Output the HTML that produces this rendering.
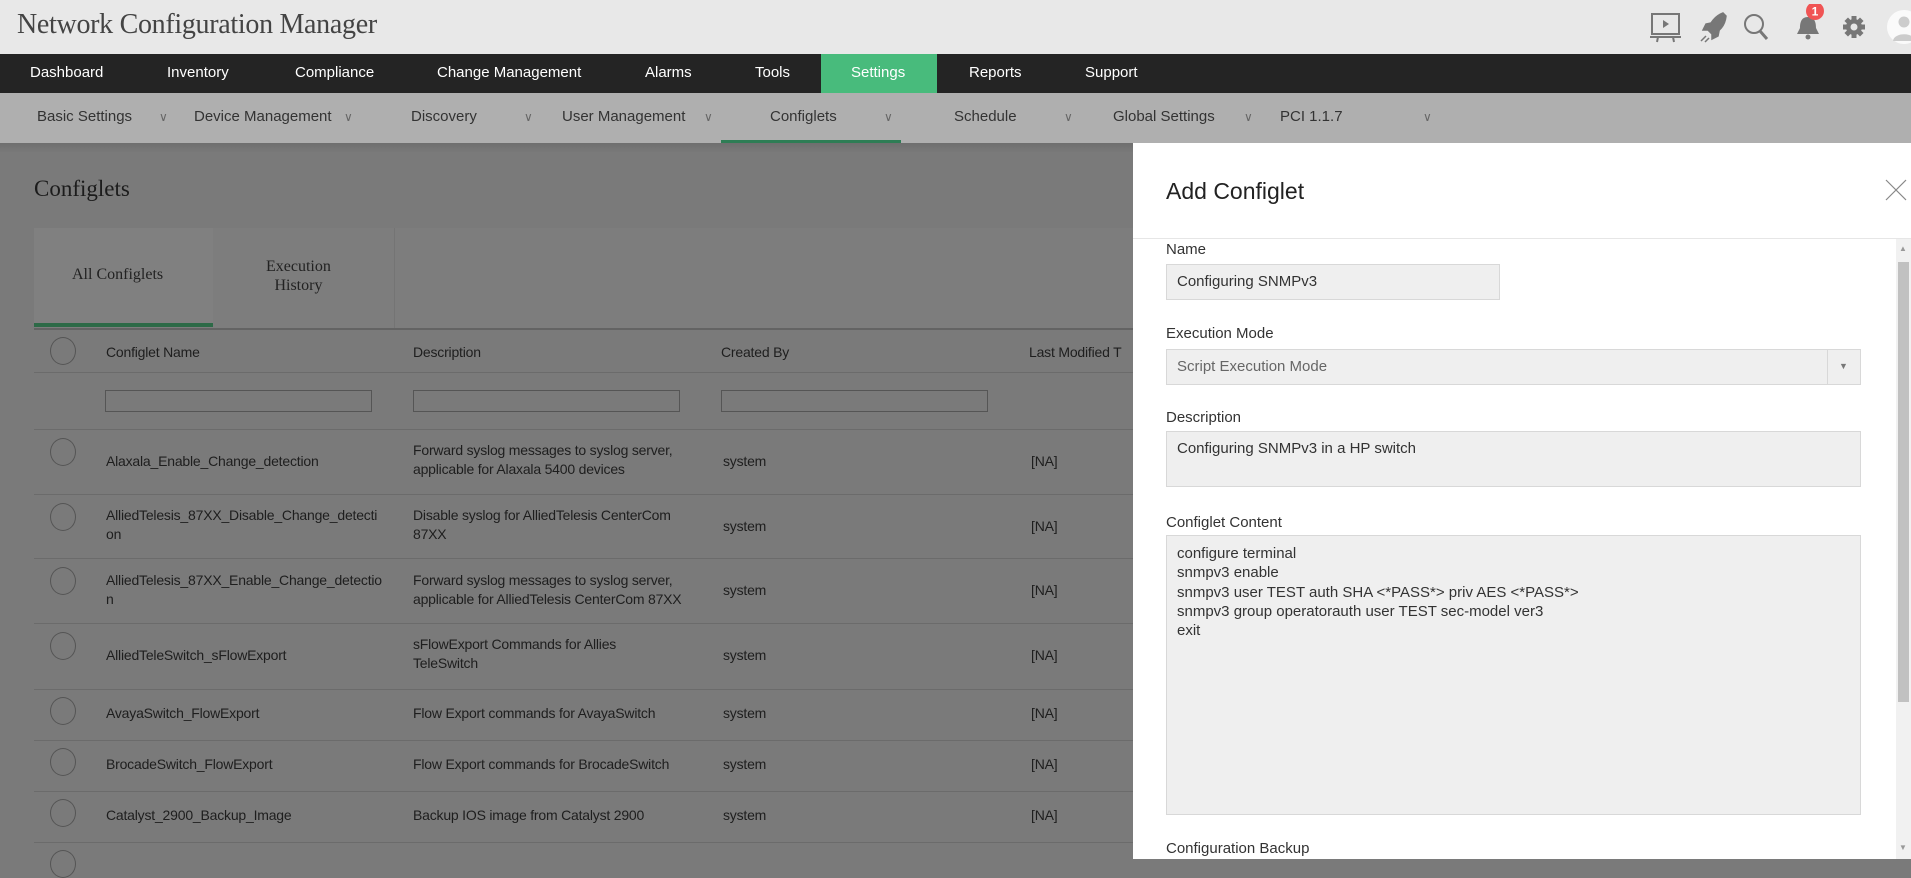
<!DOCTYPE html>
<html><head><meta charset="utf-8"><style>
*{margin:0;padding:0;box-sizing:border-box}
body{width:1911px;height:859px;overflow:hidden;position:relative;font-family:"Liberation Sans",sans-serif;background:#7a7a7a}
.a{position:absolute;white-space:nowrap}
#hdr{position:absolute;left:0;top:0;width:1911px;height:54px;background:#e8e8e8}
#title{left:17px;top:9px;font-family:"Liberation Serif",serif;font-size:28px;color:#444;letter-spacing:-0.3px}
#nav{position:absolute;left:0;top:54px;width:1911px;height:39px;background:#242424}
#nav .a{color:#fff;font-size:15px;top:10px}
#set{position:absolute;left:821px;top:54px;width:116px;height:39px;background:#48bb7c}
#sub{position:absolute;left:0;top:93px;width:1911px;height:50px;background:#afafaf}
#sub .a{font-size:15px;color:#333;top:15px}
#sub .c{color:#666;font-size:12px;top:17px}
.t{color:#1e1e1e;font-size:14px;line-height:19px;white-space:normal;letter-spacing:-0.2px}
.circ{position:absolute;width:26px;height:28px;border:1.5px solid #555;border-radius:50%}
.hl{position:absolute;left:34px;width:1100px;height:1px;background:#6b6b6b}
.in{position:absolute;top:390px;height:22px;width:267px;border:1.5px solid #555}
#panel{position:absolute;left:1133px;top:143px;width:778px;height:716px;background:#fff}
.lbl{font-size:15px;color:#333}
.box{position:absolute;background:#efefef;border:1px solid #d8d8d8;font-size:15px;color:#333;padding:8px 10px}
</style></head><body>
<div id="hdr"></div>
<div class="a" id="title">Network Configuration Manager</div>
<svg class="a" style="left:1648px;top:4px" width="263" height="40" viewBox="0 -6 263 40">
 <g fill="none" stroke="#777" stroke-width="2">
  <rect x="4" y="4" width="27" height="20"/><line x1="2" y1="27" x2="33" y2="27"/><line x1="10" y1="27" x2="9" y2="32"/><line x1="25" y1="27" x2="26" y2="32"/>
  <circle cx="106" cy="14" r="9"/><line x1="112" y1="21" x2="119" y2="29" stroke-width="3"/>
 </g>
 <path d="M15 10 L21 14 L15 18Z" fill="#777"/>
 <path d="M75 3 C67 6 62 13 60 20 L64 24 C71 22 77 16 78 6Z M60 20 L55 20 L58 14 L63 13 Z M64 24 L64 29 L70 26 L71 21Z M58 26 L53 31 M61 28 L57 32" fill="#777" stroke="#777" stroke-width="1.5"/>
 <path d="M160 7 C153 7 152 13 152 18 L149 24 L171 24 L168 18 C168 13 167 7 160 7Z" fill="#777"/><circle cx="160" cy="27" r="2.5" fill="#777"/>
 <circle cx="167" cy="1" r="9" fill="#f05454"/><text x="167" y="5.5" font-size="12" font-weight="bold" fill="#fff" text-anchor="middle" font-family="Liberation Sans">1</text>
 <g transform="translate(206,17)" fill="#777">
  <rect x="-2.5" y="-11" width="5" height="22"/><rect x="-2.5" y="-11" width="5" height="22" transform="rotate(45)"/><rect x="-2.5" y="-11" width="5" height="22" transform="rotate(90)"/><rect x="-2.5" y="-11" width="5" height="22" transform="rotate(135)"/>
  <circle r="8"/><circle r="3.5" fill="#e8e8e8"/>
 </g>
 <circle cx="256" cy="17" r="17" fill="#fafafa"/><circle cx="256" cy="12" r="5.5" fill="#ccc"/><path d="M245 31 C246 22 266 22 267 31Z" fill="#ccc"/>
</svg>
<div id="nav">
 <div class="a" style="left:30px">Dashboard</div>
 <div class="a" style="left:167px">Inventory</div>
 <div class="a" style="left:295px">Compliance</div>
 <div class="a" style="left:437px">Change Management</div>
 <div class="a" style="left:645px">Alarms</div>
 <div class="a" style="left:755px">Tools</div>
 <div class="a" style="left:969px">Reports</div>
 <div class="a" style="left:1085px">Support</div>
</div>
<div id="set"><div class="a" style="left:30px;top:10px;color:#fff;font-size:15px">Settings</div></div>
<div id="sub">
 <div class="a" style="left:37px">Basic Settings</div><div class="a c" style="left:159px">&#8744;</div>
 <div class="a" style="left:194px">Device Management</div><div class="a c" style="left:344px">&#8744;</div>
 <div class="a" style="left:411px">Discovery</div><div class="a c" style="left:524px">&#8744;</div>
 <div class="a" style="left:562px">User Management</div><div class="a c" style="left:704px">&#8744;</div>
 <div class="a" style="left:770px">Configlets</div><div class="a c" style="left:884px">&#8744;</div>
 <div class="a" style="left:954px">Schedule</div><div class="a c" style="left:1064px">&#8744;</div>
 <div class="a" style="left:1113px">Global Settings</div><div class="a c" style="left:1244px">&#8744;</div>
 <div class="a" style="left:1280px">PCI 1.1.7</div><div class="a c" style="left:1423px">&#8744;</div>
 <div style="position:absolute;left:721px;top:47px;width:180px;height:3px;background:#2e7d55"></div>
</div>
<div style="position:absolute;left:0;top:143px;width:1911px;height:10px;background:linear-gradient(#6e6e6e,#7a7a7a)"></div>
<div class="a" style="left:34px;top:176px;font-size:23px;color:#1c1c1c;font-family:'Liberation Serif',serif">Configlets</div>
<div style="position:absolute;left:34px;top:228px;width:1100px;height:100px;background:#7d7d7d"></div>
<div style="position:absolute;left:34px;top:228px;width:179px;height:96px;background:#808080"></div>
<div style="position:absolute;left:394px;top:228px;width:1px;height:100px;background:#747474"></div>
<div style="position:absolute;left:34px;top:323px;width:179px;height:4px;background:#2d6a47"></div>
<div class="a" style="left:72px;top:266px;font-family:'Liberation Serif',serif;font-size:16px;color:#222">All Configlets</div>
<div class="a" style="left:266px;top:257px;font-family:'Liberation Serif',serif;font-size:16px;color:#222;text-align:center;line-height:19px">Execution<br>History</div>
<div class="hl" style="top:328px;height:2px;background:#636363"></div>
<div class="circ" style="left:50px;top:337px"></div>
<div class="a t" style="left:106px;top:343px">Configlet Name</div>
<div class="a t" style="left:413px;top:343px">Description</div>
<div class="a t" style="left:721px;top:343px">Created By</div>
<div class="a t" style="left:1029px;top:343px">Last Modified T</div>
<div class="hl" style="top:372px"></div>
<div class="in" style="left:105px"></div><div class="in" style="left:413px"></div><div class="in" style="left:721px"></div>
<div class="hl" style="top:429px"></div>
<div class="circ" style="left:50px;top:438px"></div>
<div class="a t" style="left:106px;top:452px">Alaxala_Enable_Change_detection</div>
<div class="a t" style="left:413px;top:441px;width:300px">Forward syslog messages to syslog server,<br>applicable for Alaxala 5400 devices</div>
<div class="a t" style="left:723px;top:452px">system</div><div class="a t" style="left:1031px;top:452px">[NA]</div>
<div class="hl" style="top:494px"></div>
<div class="circ" style="left:50px;top:503px"></div>
<div class="a t" style="left:106px;top:506px">AlliedTelesis_87XX_Disable_Change_detecti<br>on</div>
<div class="a t" style="left:413px;top:506px">Disable syslog for AlliedTelesis CenterCom<br>87XX</div>
<div class="a t" style="left:723px;top:517px">system</div><div class="a t" style="left:1031px;top:517px">[NA]</div>
<div class="hl" style="top:558px"></div>
<div class="circ" style="left:50px;top:567px"></div>
<div class="a t" style="left:106px;top:571px">AlliedTelesis_87XX_Enable_Change_detectio<br>n</div>
<div class="a t" style="left:413px;top:571px">Forward syslog messages to syslog server,<br>applicable for AlliedTelesis CenterCom 87XX</div>
<div class="a t" style="left:723px;top:581px">system</div><div class="a t" style="left:1031px;top:581px">[NA]</div>
<div class="hl" style="top:623px"></div>
<div class="circ" style="left:50px;top:632px"></div>
<div class="a t" style="left:106px;top:646px">AlliedTeleSwitch_sFlowExport</div>
<div class="a t" style="left:413px;top:635px">sFlowExport Commands for Allies<br>TeleSwitch</div>
<div class="a t" style="left:723px;top:646px">system</div><div class="a t" style="left:1031px;top:646px">[NA]</div>
<div class="hl" style="top:689px"></div>
<div class="circ" style="left:50px;top:697px"></div>
<div class="a t" style="left:106px;top:704px">AvayaSwitch_FlowExport</div>
<div class="a t" style="left:413px;top:704px">Flow Export commands for AvayaSwitch</div>
<div class="a t" style="left:723px;top:704px">system</div><div class="a t" style="left:1031px;top:704px">[NA]</div>
<div class="hl" style="top:740px"></div>
<div class="circ" style="left:50px;top:748px"></div>
<div class="a t" style="left:106px;top:755px">BrocadeSwitch_FlowExport</div>
<div class="a t" style="left:413px;top:755px">Flow Export commands for BrocadeSwitch</div>
<div class="a t" style="left:723px;top:755px">system</div><div class="a t" style="left:1031px;top:755px">[NA]</div>
<div class="hl" style="top:791px"></div>
<div class="circ" style="left:50px;top:799px"></div>
<div class="a t" style="left:106px;top:806px">Catalyst_2900_Backup_Image</div>
<div class="a t" style="left:413px;top:806px">Backup IOS image from Catalyst 2900</div>
<div class="a t" style="left:723px;top:806px">system</div><div class="a t" style="left:1031px;top:806px">[NA]</div>
<div class="hl" style="top:842px"></div>
<div class="circ" style="left:50px;top:850px"></div>
<div id="panel">
 <div class="a" style="left:33px;top:35px;font-size:23px;color:#222">Add Configlet</div>
 <svg class="a" style="left:752px;top:36px" width="22" height="22"><path d="M1 1L21 21M21 1L1 21" stroke="#888" stroke-width="1.2"/></svg>
 <div style="position:absolute;left:0;top:95px;width:778px;height:1px;background:#e6e6e6"></div>
 <div style="position:absolute;left:763px;top:96px;width:15px;height:620px;background:#f1f1f1"></div>
 <div style="position:absolute;left:765px;top:119px;width:11px;height:440px;background:#c1c1c1"></div>
 <div class="a" style="left:766px;top:101px;font-size:8px;color:#999">&#9650;</div>
 <div class="a" style="left:766px;top:700px;font-size:8px;color:#999">&#9660;</div>
 <div class="a lbl" style="left:33px;top:98px">Name</div>
 <div class="box" style="left:33px;top:121px;width:334px;height:36px">Configuring SNMPv3</div>
 <div class="a lbl" style="left:33px;top:182px">Execution Mode</div>
 <div class="box" style="left:33px;top:206px;width:695px;height:36px;color:#666">Script Execution Mode</div>
 <div style="position:absolute;left:694px;top:207px;width:1px;height:34px;background:#d8d8d8"></div>
 <div class="a" style="left:706px;top:218px;font-size:9px;color:#777">&#9660;</div>
 <div class="a lbl" style="left:33px;top:266px">Description</div>
 <div class="box" style="left:33px;top:288px;width:695px;height:56px">Configuring SNMPv3 in a HP switch</div>
 <div class="a lbl" style="left:33px;top:371px">Configlet Content</div>
 <div class="box" style="left:33px;top:392px;width:695px;height:280px;line-height:19.3px">configure terminal<br>snmpv3 enable<br>snmpv3 user TEST auth SHA &lt;*PASS*&gt; priv AES &lt;*PASS*&gt;<br>snmpv3 group operatorauth user TEST sec-model ver3<br>exit</div>
 <div class="a lbl" style="left:33px;top:697px">Configuration Backup</div>
</div>
</body></html>
